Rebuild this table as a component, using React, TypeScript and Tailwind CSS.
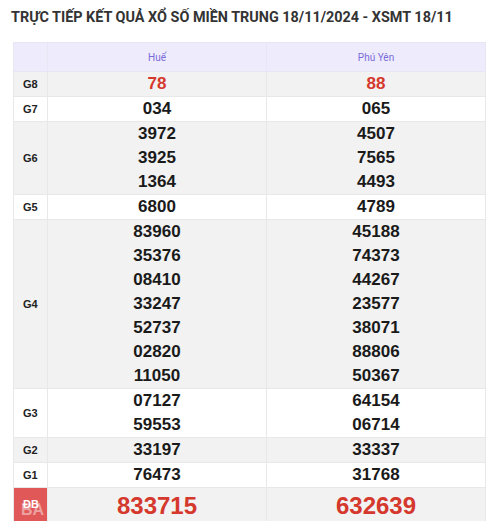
import React from 'react';

interface Row {
  label: string;
  hue: string[];
  phuYen: string[];
  tone: 'gray' | 'white';
  red?: boolean;
}

const rows: Row[] = [
  { label: 'G8', hue: ['78'], phuYen: ['88'], tone: 'gray', red: true },
  { label: 'G7', hue: ['034'], phuYen: ['065'], tone: 'white' },
  { label: 'G6', hue: ['3972', '3925', '1364'], phuYen: ['4507', '7565', '4493'], tone: 'gray' },
  { label: 'G5', hue: ['6800'], phuYen: ['4789'], tone: 'white' },
  {
    label: 'G4',
    hue: ['83960', '35376', '08410', '33247', '52737', '02820', '11050'],
    phuYen: ['45188', '74373', '44267', '23577', '38071', '88806', '50367'],
    tone: 'gray',
  },
  { label: 'G3', hue: ['07127', '59553'], phuYen: ['64154', '06714'], tone: 'white' },
  { label: 'G2', hue: ['33197'], phuYen: ['33337'], tone: 'gray' },
  { label: 'G1', hue: ['76473'], phuYen: ['31768'], tone: 'white' },
];

function Numbers({ values, red }: { values: string[]; red?: boolean }) {
  return (
    <div className="flex flex-col items-center">
      {values.map((v, i) => (
        <span
          key={i}
          className={`block text-[17px] font-bold leading-[24px] ${red ? 'text-[#d5382c]' : 'text-[#1a1a1a]'}`}
        >
          {v}
        </span>
      ))}
    </div>
  );
}

export default function App() {
  return (
    <div className="w-[500px] h-[521px] overflow-hidden bg-white font-['Liberation_Sans',Arial,sans-serif]">
      {/* Heading */}
      <h1 className="pl-[11px] pt-[8px] h-[42px] text-[14.4px] leading-[20px] font-bold text-[#333] font-['Roboto',sans-serif]">
        TRỰC TIẾP KẾT QUẢ XỔ SỐ MIỀN TRUNG 18/11/2024 - XSMT 18/11
      </h1>

      <table className="ml-[13px] w-[472px] table-fixed border-collapse">
        <colgroup>
          <col className="w-[34px]" />
          <col className="w-[219px]" />
          <col className="w-[219px]" />
        </colgroup>
        <thead>
          <tr className="bg-[#eeecfc] h-[29px]">
            <th className="border border-[#e7e6f2]" />
            <th className="border border-[#e7e6f2] text-[10px] font-normal text-[#7a6ad8] font-['Roboto',sans-serif]">Huế</th>
            <th className="border border-[#e7e6f2] text-[10px] font-normal text-[#7a6ad8] font-['Roboto',sans-serif]">Phú Yên</th>
          </tr>
        </thead>
        <tbody>
          {rows.map((r) => (
            <tr key={r.label} className={r.tone === 'gray' ? 'bg-[#f2f2f2]' : 'bg-white'}>
              <td className="border border-[#e8e8e8] pl-[9px] text-[11px] font-bold text-[#222]">{r.label}</td>
              <td className="border border-[#e8e8e8] p-0">
                <Numbers values={r.hue} red={r.red} />
              </td>
              <td className="border border-[#e8e8e8] p-0">
                <Numbers values={r.phuYen} red={r.red} />
              </td>
            </tr>
          ))}
          <tr className="bg-[#f2f2f2] h-[40px]">
            <td className="relative border border-[#e8e8e8] bg-[#e05858] pl-[9px] pb-[6px] text-[11px] font-bold text-white">
              ĐB
              {/* faint watermark over the cell */}
              <span className="absolute left-[7px] top-[14px] text-[16px] leading-[16px] font-bold text-white/45">BA</span>
            </td>
            <td className="border border-[#e8e8e8] text-center text-[24px] font-bold leading-[36px] text-[#d5382c] align-top">833715</td>
            <td className="border border-[#e8e8e8] text-center text-[24px] font-bold leading-[36px] text-[#d5382c] align-top">632639</td>
          </tr>
        </tbody>
      </table>
    </div>
  );
}
